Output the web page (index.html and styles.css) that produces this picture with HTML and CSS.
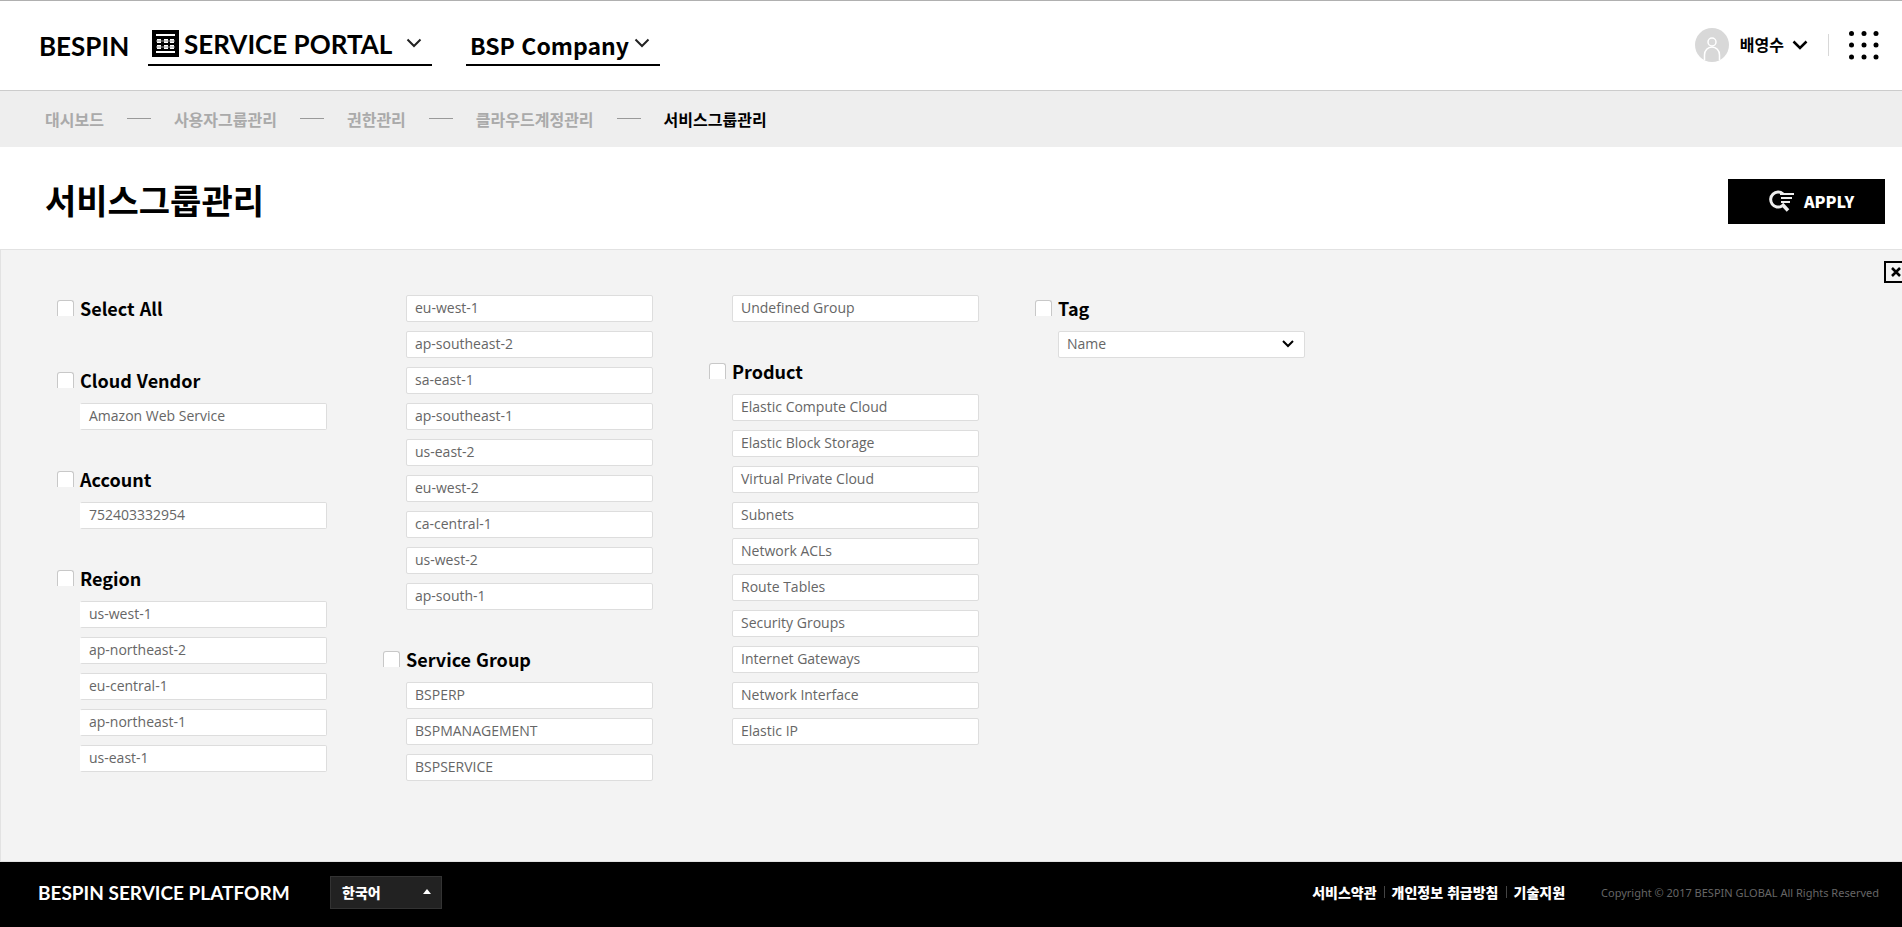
FILE: index.html
```html
<!DOCTYPE html>
<html lang="ko">
<head>
<meta charset="utf-8">
<title>서비스그룹관리</title>
<link rel="stylesheet" href="styles.css">
</head>
<body>
<header class="header">
  <div class="brand">
    <a class="brand-name" href="#">BESPIN</a>
    <button class="switcher switcher-portal" type="button">
      <svg class="portal-icon" width="27" height="27" viewBox="0 0 27 27" aria-hidden="true">
        <path fill="#000" d="M0 0h27v27H0z"/>
        <path fill="#fff" d="M4 4h19v2H4zM5 9h4v4H5zM12 9h4v4h-4zM18 9h4v4h-4zM5 15h4v4H5zM12 15h4v4h-4zM18 15h4v4h-4zM4 21h19v2H4z"/>
        <path fill="#999" d="M4 10.500h19v1H4zM4 16.500h19v1H4z"/>
      </svg>
      <span class="portal-name">SERVICE PORTAL</span>
      <svg class="chevron" width="16" height="10" viewBox="0 0 16 10" aria-hidden="true"><path d="M1.500 1.500 8 8l6.500-6.500"/></svg>
    </button>
    <button class="switcher switcher-company" type="button">
      <span class="company-name">BSP Company</span>
      <svg class="chevron" width="16" height="10" viewBox="0 0 16 10" aria-hidden="true"><path d="M1.500 1.500 8 8l6.500-6.500"/></svg>
    </button>
  </div>
  <div class="account">
    <button class="user" type="button">
      <svg width="34" height="34" viewBox="0 0 34 34" aria-hidden="true">
        <circle cx="17" cy="17" r="17" fill="#d8d8d8"/>
        <g fill="none" stroke="#fff" stroke-width="1.500"><circle cx="17" cy="14" r="4"/><path d="M9.500 32v-5a7.500 8 0 0 1 15 0v5"/></g>
      </svg>
      <span class="user-name">배영수</span>
      <svg class="chevron chevron-strong" width="16" height="10" viewBox="0 0 16 10" aria-hidden="true"><path d="M1.500 1.500 8 8l6.500-6.500"/></svg>
    </button>
    <button class="apps" type="button" aria-label="메뉴">
      <svg width="30" height="29" viewBox="0 0 30 29" aria-hidden="true">
        <circle cx="2.500" cy="2.500" r="2.500"/><circle cx="15" cy="2.500" r="2.500"/><circle cx="27" cy="2.500" r="2.500"/>
        <circle cx="2.500" cy="14" r="2.500"/><circle cx="15" cy="14" r="2.500"/><circle cx="27" cy="14" r="2.500"/>
        <circle cx="2.500" cy="26" r="2.500"/><circle cx="15" cy="26" r="2.500"/><circle cx="27" cy="26" r="2.500"/>
      </svg>
    </button>
  </div>
</header>

<nav class="steps" aria-label="단계">
  <a href="#">대시보드</a>
  <a href="#">사용자그룹관리</a>
  <a href="#">권한관리</a>
  <a href="#">클라우드계정관리</a>
  <a class="current" href="#" aria-current="page">서비스그룹관리</a>
</nav>

<div class="title-bar">
  <h1>서비스그룹관리</h1>
  <button class="apply" type="button">
    <svg width="26" height="22" viewBox="0 0 26 22" fill="none" stroke="#eee" aria-hidden="true">
      <path stroke-width="3" d="M15 3.800A7.500 7.500 0 1 0 14 16"/>
      <path stroke-width="2" d="M12 4h14M13 8h11M13 12h9"/>
      <path stroke-width="3.500" d="m14 14 6 6.500"/>
    </svg>
    <span>APPLY</span>
  </button>
</div>

<main class="panel">
  <button class="close" type="button" aria-label="닫기">
    <svg width="10" height="10" viewBox="0 0 10 10" aria-hidden="true"><path d="m1 1 8 8M9 1 1 9" stroke="#000" stroke-width="2.500"/></svg>
  </button>
  <div class="columns">
    <div class="column column-first">
      <section class="group">
        <label class="head"><input type="checkbox"><span>Select All</span></label>
      </section>
      <section class="group">
        <label class="head"><input type="checkbox"><span>Cloud Vendor</span></label>
        <div class="items"><button type="button">Amazon Web Service</button></div>
      </section>
      <section class="group">
        <label class="head"><input type="checkbox"><span>Account</span></label>
        <div class="items"><button type="button">752403332954</button></div>
      </section>
      <section class="group">
        <label class="head"><input type="checkbox"><span>Region</span></label>
        <div class="items">
          <button type="button">us-west-1</button>
          <button type="button">ap-northeast-2</button>
          <button type="button">eu-central-1</button>
          <button type="button">ap-northeast-1</button>
          <button type="button">us-east-1</button>
        </div>
      </section>
    </div>
    <div class="column">
      <section class="group">
        <div class="items">
          <button type="button">eu-west-1</button>
          <button type="button">ap-southeast-2</button>
          <button type="button">sa-east-1</button>
          <button type="button">ap-southeast-1</button>
          <button type="button">us-east-2</button>
          <button type="button">eu-west-2</button>
          <button type="button">ca-central-1</button>
          <button type="button">us-west-2</button>
          <button type="button">ap-south-1</button>
        </div>
      </section>
      <section class="group">
        <label class="head"><input type="checkbox"><span>Service Group</span></label>
        <div class="items">
          <button type="button">BSPERP</button>
          <button type="button">BSPMANAGEMENT</button>
          <button type="button">BSPSERVICE</button>
        </div>
      </section>
    </div>
    <div class="column">
      <section class="group">
        <div class="items"><button type="button">Undefined Group</button></div>
      </section>
      <section class="group">
        <label class="head"><input type="checkbox"><span>Product</span></label>
        <div class="items">
          <button type="button">Elastic Compute Cloud</button>
          <button type="button">Elastic Block Storage</button>
          <button type="button">Virtual Private Cloud</button>
          <button type="button">Subnets</button>
          <button type="button">Network ACLs</button>
          <button type="button">Route Tables</button>
          <button type="button">Security Groups</button>
          <button type="button">Internet Gateways</button>
          <button type="button">Network Interface</button>
          <button type="button">Elastic IP</button>
        </div>
      </section>
    </div>
    <div class="column">
      <section class="group">
        <label class="head"><input type="checkbox"><span>Tag</span></label>
        <div class="items tag-select">
          <select aria-label="Tag"><option>Name</option></select>
          <svg class="select-arrow" width="12" height="8" viewBox="0 0 12 8" aria-hidden="true"><path d="m1 1 5 5 5-5"/></svg>
        </div>
      </section>
    </div>
  </div>
</main>

<footer class="footer">
  <div class="footer-brand">BESPIN SERVICE PLATFORM</div>
  <button class="language" type="button">
    <span>한국어</span>
    <svg width="8" height="5" viewBox="0 0 8 5" aria-hidden="true"><path fill="#fff" d="M4 0l4 5H0z"/></svg>
  </button>
  <nav class="legal">
    <a href="#">서비스약관</a>
    <a href="#">개인정보 취급방침</a>
    <a href="#">기술지원</a>
  </nav>
  <small class="copyright">Copyright © 2017 BESPIN GLOBAL All Rights Reserved</small>
</footer>
</body>
</html>
```
FILE: styles.css
```css
* { box-sizing: border-box; }
body {
  margin: 0;
  min-height: 100vh;
  display: flex;
  flex-direction: column;
  overflow-x: hidden;
  background: #fff;
  color: #000;
  font-family: "Noto Sans CJK KR", "Noto Sans", sans-serif;
}
button {
  margin: 0;
  padding: 0;
  border: 0;
  background: none;
  color: inherit;
  font: inherit;
  cursor: pointer;
}
a { color: inherit; text-decoration: none; }
svg { display: block; flex: none; }

/* Header */
.header {
  display: flex;
  justify-content: space-between;
  height: 91px;
  padding: 0 23px 0 39px;
  border-top: 1px solid #b0b0b0;
  border-bottom: 1px solid #ccc;
}
.brand { display: flex; align-items: flex-start; padding-top: 25px; }
.brand-name {
  width: 109px;
  padding-top: 5px;
  font: 700 26px/30px Lato, sans-serif;
}
.switcher {
  display: flex;
  align-items: center;
  height: 40px;
  padding: 0 10px 4px 4px;
  border-bottom: 2px solid #000;
}
.switcher .chevron { margin-left: auto; }
.switcher-portal { min-width: 284px; }
.switcher-company { min-width: 194px; margin-left: 34px; }
.portal-name { margin-left: 5px; padding-top: 1px; font: 700 26px/30px Lato, sans-serif; }
.company-name { padding-top: 4px; font-size: 23px; line-height: 30px; font-weight: 700; }
.chevron { fill: none; stroke: #222; stroke-width: 2; }
.chevron-strong { stroke: #000; stroke-width: 2.5; }
.account { display: flex; align-items: center; padding-bottom: 1px; }
.user { display: flex; align-items: center; height: 34px; }
.user-name { margin: 0 8px 0 11px; padding-bottom: 2px; font-size: 16px; line-height: 24px; font-weight: 700; }
.apps { display: flex; height: 29px; margin-left: 20px; padding-left: 21px; position: relative; }
.apps::before {
  content: "";
  position: absolute;
  left: 0;
  top: 3px;
  height: 22px;
  border-left: 1px solid #d8d8d8;
}

/* Steps */
.steps {
  display: flex;
  align-items: center;
  height: 56px;
  padding: 0 45px 1px;
  background: #eee;
  color: #aaa;
  font-size: 16px;
  line-height: 22px;
  font-weight: 700;
}
.steps a { display: flex; align-items: center; }
.steps a + a::before {
  content: "";
  width: 24px;
  height: 1px;
  margin: 0 23px;
  background: #999;
}
.steps .current { color: #000; }

/* Title */
.title-bar {
  display: flex;
  justify-content: space-between;
  align-items: center;
  height: 102px;
  padding: 6px 17px 0 45px;
}
h1 { margin: 0; padding-bottom: 2px; font-size: 34px; line-height: 48px; font-weight: 700; }
.apply {
  display: flex;
  align-items: center;
  justify-content: center;
  gap: 10px;
  width: 157px;
  height: 45px;
  padding: 0 0 1px 9px;
  background: #000;
  color: #fff;
  font: 900 16px/24px "Noto Sans CJK KR", sans-serif;
}

/* Filter panel */
.panel {
  flex: 1;
  position: relative;
  overflow: hidden;
  padding: 45px 56px 80px;
  border: solid #e2e2e2;
  border-width: 1px 0 1px 1px;
  background: #f3f3f3;
}
.close {
  position: absolute;
  top: 11px;
  right: -6px;
  display: flex;
  align-items: center;
  justify-content: center;
  width: 24px;
  height: 22px;
  border: 2px solid #000;
}
.columns { display: flex; gap: 56px; }
.column { display: flex; flex-direction: column; gap: 36px; width: 270px; }
.head {
  display: flex;
  align-items: flex-start;
  gap: 6px;
  height: 36px;
  font-size: 18px;
  line-height: 26px;
  font-weight: 700;
}
.head input {
  appearance: none;
  width: 17px;
  height: 16px;
  margin: 5px 0 0;
  border: solid #c8c8c8;
  border-width: 1px 1px 0;
  border-radius: 3px 3px 0 0;
  background: #fff;
}
.items { display: flex; flex-direction: column; gap: 9px; padding-left: 23px; }
.items button, .items select {
  width: 100%;
  height: 27px;
  padding: 0 8px 2px;
  border: 1px solid #ddd;
  border-radius: 2px;
  background: #fff;
  color: #666;
  font: 400 14px/22px "Open Sans", "Noto Sans", sans-serif;
  text-align: left;
}
.column-first .items button { border-left-color: #fff; }
.tag-select { position: relative; }
.tag-select select { appearance: none; }
.select-arrow {
  position: absolute;
  right: 11px;
  top: 9px;
  fill: none;
  stroke: #000;
  stroke-width: 2;
  pointer-events: none;
}

/* Footer */
.footer {
  display: flex;
  align-items: center;
  height: 65px;
  padding: 0 23px 4px 38px;
  background: #000;
  color: #fff;
}
.footer-brand { width: 292px; font: 700 19px/24px Lato, sans-serif; }
.language {
  display: flex;
  align-items: center;
  justify-content: space-between;
  width: 112px;
  height: 33px;
  padding: 0 10px 2px 11px;
  border: 1px solid #333;
  background: #222;
  font-size: 14px;
  line-height: 20px;
  font-weight: 900;
}
.legal {
  display: flex;
  align-items: center;
  margin-left: auto;
  padding-bottom: 2px;
  font-size: 14px;
  line-height: 20px;
  font-weight: 900;
}
.legal a { display: flex; align-items: center; }
.legal a + a::before {
  content: "";
  width: 1px;
  height: 12px;
  margin: 0 7px;
  background: #444;
}
.copyright { margin-left: 36px; color: #666; font: 400 11px/18px "Noto Sans", sans-serif; }
```
